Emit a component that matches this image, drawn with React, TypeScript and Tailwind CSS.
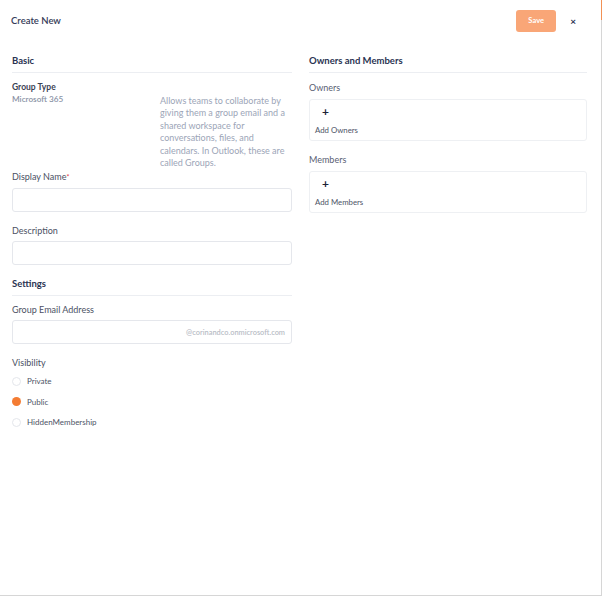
import React from 'react';

const navy = 'text-[#2a3352]';

const SectionHeading: React.FC<{ title: string }> = ({ title }) => (
  <h2 className={`text-[9.5px] font-bold leading-[16px] pb-[3px] border-b border-[#eceef2] ${navy}`}>{title}</h2>
);

const TextInput: React.FC<{ suffix?: string }> = ({ suffix }) => (
  <div className="h-[24px] w-full rounded-[3px] border border-[#e5e7ec] bg-white flex items-center justify-end px-[6px]">
    {suffix && <span className="text-[7.4px] font-semibold text-[#b9bdc6]">{suffix}</span>}
  </div>
);

const Radio: React.FC<{ label: string; checked?: boolean }> = ({ label, checked }) => (
  <label className="flex items-center h-[20.5px] gap-[6px]">
    <span
      className={
        checked
          ? 'w-[9px] h-[9px] rounded-full bg-[#f47c33]'
          : 'w-[9px] h-[9px] rounded-full border border-[#e4e6eb] bg-white'
      }
    />
    <span className="text-[8px] text-[#4d5466]">{label}</span>
  </label>
);

const AddBox: React.FC<{ label: string }> = ({ label }) => (
  <div className="h-[42px] rounded-[3px] border border-[#eef0f3] bg-white pl-[5px] pt-[4px]">
    <div className="pl-[7px] text-[12px] font-bold leading-[16px] text-[#1d2336]">+</div>
    <div className="mt-[3px] text-[7.8px] leading-[14px] text-[#4d5466]">Add {label}</div>
  </div>
);

export default function App() {
  return (
    <div className="relative w-[602px] h-[596px] bg-white border-r border-b border-[#d6d6d6] font-['Lato','Noto_Sans',sans-serif]">
      <div className="absolute right-[-1px] top-0 w-[1px] h-[20px] bg-[#f29155]" />

      {/* Header */}
      <div className="flex items-center justify-between pl-[11px] pr-[25px] pt-[10px] h-[32px]">
        <h1 className="text-[9.5px] font-semibold text-[#363c58]">Create New</h1>
        <div className="flex items-center gap-[14px]">
          <button className="w-[40px] h-[22px] rounded-[3px] bg-[#f9a677] text-white text-[7.5px] font-bold">Save</button>
          <span className={`text-[10px] font-bold ${navy}`}>×</span>
        </div>
      </div>

      <div className="flex gap-[17px] pl-[12px] pr-[14px] mt-[21px]">
        {/* Left column */}
        <div className="w-[280px]">
          <SectionHeading title="Basic" />
          <div className="flex mt-[8px]">
            <div className="w-[148px]">
              <div className="text-[8.5px] font-bold leading-[12px] text-[#3b4254]">Group Type</div>
              <div className="text-[8.2px] font-semibold leading-[12px] text-[#8b93a6]">Microsoft 365</div>
            </div>
            <p className="w-[132px] mt-[13.5px] text-[9px] leading-[12.6px] text-[#9ca5b7]">
              Allows teams to collaborate by giving them a group email and a shared workspace for conversations, files, and
              calendars. In Outlook, these are called Groups.
            </p>
          </div>

          <div className="text-[9px] leading-[14px] text-[#4b5163]">
            Display Name<span className="text-[#e6393f] align-top text-[7px]">*</span>
          </div>
          <div className="mt-[4px]">
            <TextInput />
          </div>

          <div className="mt-[12px] text-[9px] leading-[14px] text-[#4b5163]">Description</div>
          <div className="mt-[3px]">
            <TextInput />
          </div>

          <div className="mt-[11px]">
            <SectionHeading title="Settings" />
          </div>
          <div className="mt-[7px] text-[9px] leading-[14px] text-[#4b5163]">Group Email Address</div>
          <div className="mt-[3px]">
            <TextInput suffix="@corinandco.onmicrosoft.com" />
          </div>

          <div className="mt-[12px] text-[9px] leading-[14px] text-[#4b5163]">Visibility</div>
          <div className="mt-[1px]">
            <Radio label="Private" />
            <Radio label="Public" checked />
            <Radio label="HiddenMembership" />
          </div>
        </div>

        {/* Right column */}
        <div className="w-[279px]">
          <SectionHeading title="Owners and Members" />
          <div className="mt-[8px] text-[9px] leading-[14px] text-[#596073]">Owners</div>
          <div className="mt-[4px]">
            <AddBox label="Owners" />
          </div>
          <div className="mt-[12px] text-[9px] leading-[14px] text-[#596073]">Members</div>
          <div className="mt-[4px]">
            <AddBox label="Members" />
          </div>
        </div>
      </div>
    </div>
  );
}
